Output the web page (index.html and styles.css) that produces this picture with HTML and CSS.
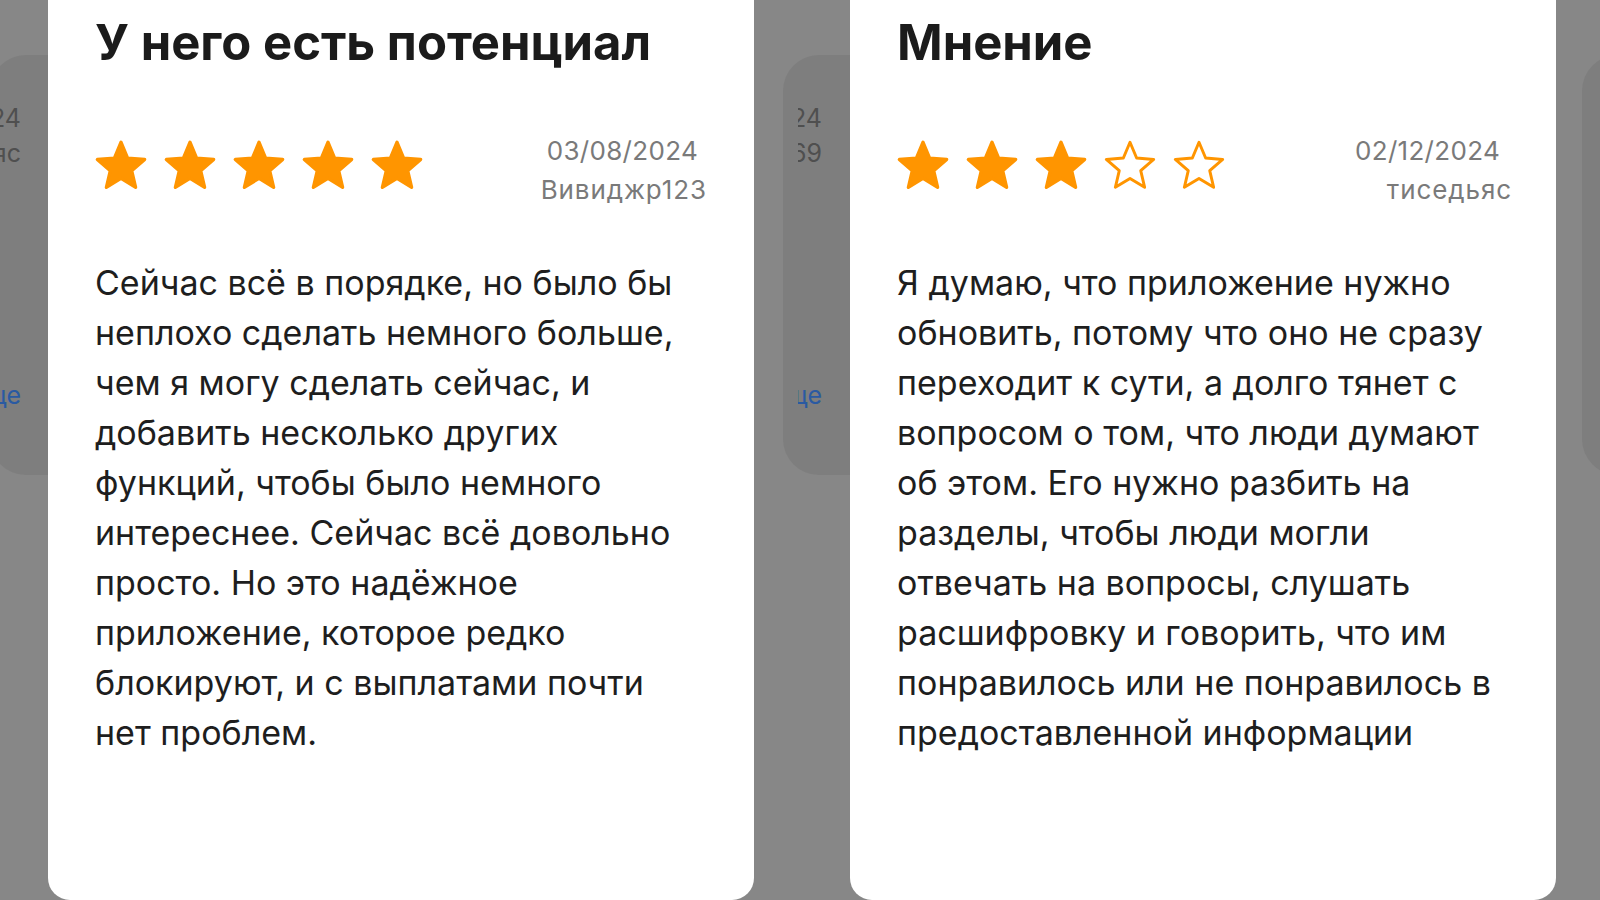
FILE: index.html
```html
<!DOCTYPE html>
<html lang="ru">
<head>
<meta charset="utf-8">
<title>Отзывы</title>
<link rel="stylesheet" href="styles.css">
</head>
<body>
<svg width="0" height="0" class="defs" aria-hidden="true">
  <defs>
    <polygon id="star-shape" points="12,1.5 15.06,8.79 22.94,9.45 16.95,14.61 18.76,22.3 12,18.2 5.24,22.3 7.05,14.61 1.06,9.45 8.94,8.79"/>
  </defs>
</svg>
<div class="stage">
  <div class="ghost ghost-left">
    <div class="ghost-clip">
      <div class="g-line g-meta">2024</div>
      <div class="g-line g-meta">тиседьяс</div>
      <div class="g-line g-link">еще</div>
    </div>
  </div>

  <article class="card card-left">
    <h2 class="title">У него есть потенциал</h2>
    <div class="row">
      <div class="stars">
        <svg class="star full" viewBox="0 0 24 24"><use href="#star-shape"/></svg>
        <svg class="star full" viewBox="0 0 24 24"><use href="#star-shape"/></svg>
        <svg class="star full" viewBox="0 0 24 24"><use href="#star-shape"/></svg>
        <svg class="star full" viewBox="0 0 24 24"><use href="#star-shape"/></svg>
        <svg class="star full" viewBox="0 0 24 24"><use href="#star-shape"/></svg>
      </div>
      <div class="meta">
        <div class="date">03/08/2024</div>
        <div class="author">Вивиджр123</div>
      </div>
    </div>
    <p class="body">Сейчас всё в порядке, но было бы<br>неплохо сделать немного больше,<br>чем я могу сделать сейчас, и<br>добавить несколько других<br>функций, чтобы было немного<br>интереснее. Сейчас всё довольно<br>просто. Но это надёжное<br>приложение, которое редко<br>блокируют, и с выплатами почти<br>нет проблем.</p>
  </article>

  <div class="ghost ghost-mid">
    <div class="ghost-clip">
      <div class="g-line g-meta">2024</div>
      <div class="g-line g-meta">1969</div>
      <div class="g-line g-link">еще</div>
    </div>
  </div>

  <article class="card card-right">
    <h2 class="title">Мнение</h2>
    <div class="row">
      <div class="stars">
        <svg class="star full" viewBox="0 0 24 24"><use href="#star-shape"/></svg>
        <svg class="star full" viewBox="0 0 24 24"><use href="#star-shape"/></svg>
        <svg class="star full" viewBox="0 0 24 24"><use href="#star-shape"/></svg>
        <svg class="star empty" viewBox="0 0 24 24"><use href="#star-shape"/></svg>
        <svg class="star empty" viewBox="0 0 24 24"><use href="#star-shape"/></svg>
      </div>
      <div class="meta">
        <div class="date">02/12/2024</div>
        <div class="author">тиседьяс</div>
      </div>
    </div>
    <p class="body">Я думаю, что приложение нужно<br>обновить, потому что оно не сразу<br>переходит к сути, а долго тянет с<br>вопросом о том, что люди думают<br>об этом. Его нужно разбить на<br>разделы, чтобы люди могли<br>отвечать на вопросы, слушать<br>расшифровку и говорить, что им<br>понравилось или не понравилось в<br>предоставленной информации</p>
  </article>

  <div class="ghost ghost-right"></div>
</div>
</body>
</html>
```

FILE: styles.css
```css
html, body {
  margin: 0;
  padding: 0;
}

body {
  background: #878787;
  font-family: Inter, "Noto Sans", "DejaVu Sans", sans-serif;
  overflow: hidden;
}

.defs {
  position: absolute;
  width: 0;
  height: 0;
}

.stage {
  display: flex;
  align-items: flex-start;
  width: 1600px;
  height: 900px;
  overflow: hidden;
}

/* peeking carousel cards behind the dim overlay */
.ghost {
  flex: 0 0 auto;
  margin-top: 55px;
  height: 420px;
  background: #7e7e7e;
  border-radius: 36px 0 0 36px;
  box-sizing: border-box;
  padding-top: 46px;
}

.ghost-left {
  width: 58px;
  margin-left: -10px;
  padding-left: 10px;
}

.ghost-mid {
  width: 67px;
  margin-left: 29px;
  padding-left: 15px;
}

.ghost-right {
  width: 100px;
  margin-left: 26px;
}

.ghost-left .ghost-clip {
  width: 21px;
}

.ghost-mid .ghost-clip {
  width: 24px;
}

.g-line {
  display: flex;
  justify-content: flex-end;
  overflow: hidden;
  white-space: nowrap;
  font-size: 25px;
  line-height: 35px;
}

.g-meta {
  color: #4f4f4f;
}

.g-link {
  color: #2a5aa2;
  margin-top: 207px;
}

/* review cards */
.card {
  flex: 0 0 706px;
  height: 940px;
  margin-top: -40px;
  box-sizing: border-box;
  padding: 55px 0 0 47px;
  background: #ffffff;
  border-radius: 0 0 22px 22px;
}

.title {
  margin: 0;
  font-weight: 700;
  font-size: 49px;
  line-height: 56px;
  letter-spacing: 0;
  color: #1b1b1b;
}

.row {
  display: flex;
  justify-content: space-between;
  align-items: flex-start;
  margin-top: 60px;
  padding-right: 47px;
}

.date {
  margin-right: 9px;
}

.card-right .author {
  margin-right: -3px;
}

.stars {
  display: flex;
  gap: 17px;
  margin-top: 8px;
}

.star {
  width: 52px;
  height: 52px;
  display: block;
}

.star.full {
  fill: #ff9500;
  stroke: #ff9500;
  stroke-width: 1.5;
  stroke-linejoin: round;
}

.star.empty {
  fill: none;
  stroke: #ff9500;
  stroke-width: 1.35;
  stroke-linejoin: round;
}

.meta {
  text-align: right;
  font-size: 26px;
  line-height: 39px;
  letter-spacing: 0.3px;
  color: #7a7a7a;
}

.author {
  letter-spacing: 0.9px;
}

.body {
  margin: 49px 0 0;
  font-size: 34px;
  line-height: 50px;
  color: #1e1e1e;
  white-space: nowrap;
}
```
